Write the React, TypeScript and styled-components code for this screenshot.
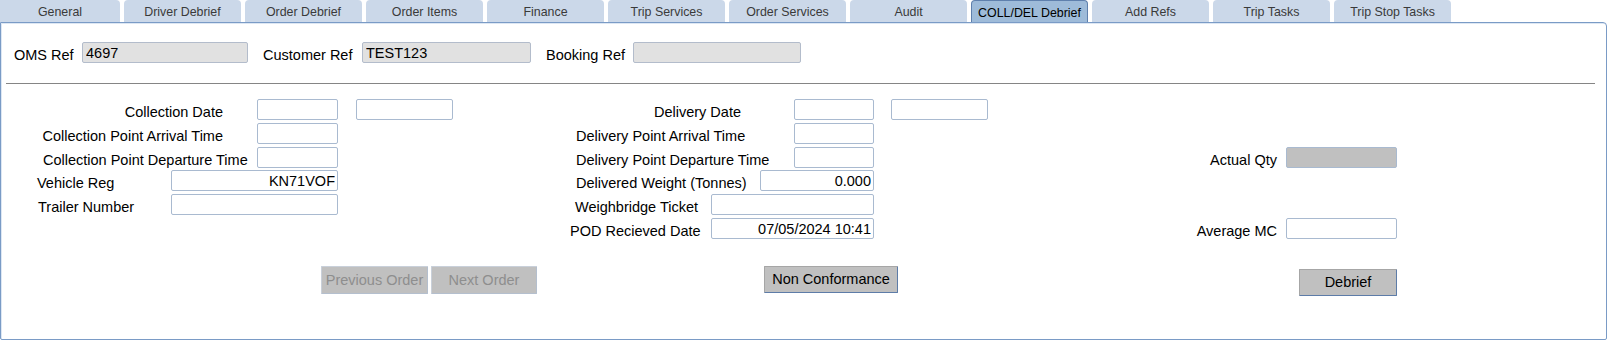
import React from "react";
import styled, { createGlobalStyle, css } from "styled-components";

const GlobalStyle = createGlobalStyle`
  html, body { margin: 0; padding: 0; background: #ffffff; }
  body {
    font-family: "Liberation Sans", Arial, sans-serif;
    width: 1609px;
    height: 342px;
    overflow: hidden;
  }
`;

const Screen = styled.div`
  width: 1609px;
  height: 342px;
  display: flex;
  flex-direction: column;
`;

const TabBar = styled.div`
  display: flex;
  gap: 4px;
  height: 22px;
`;

const Tab = styled.div<{ $active?: boolean }>`
  width: 117px;
  height: 22px;
  box-sizing: border-box;
  display: flex;
  align-items: center;
  justify-content: center;
  padding-top: 2px;
  font-size: 12.4px;
  color: #3a3a3a;
  background: #cbd8e9;
  border-radius: 4px 4px 0 0;
  &:first-child {
    width: 120px;
    border-top-left-radius: 0;
  }
  ${(p) =>
    p.$active &&
    css`
      background: #9ebbd9;
      color: #000000;
      border: 1px solid #5f80ad;
      border-bottom: none;
    `}
`;

const Panel = styled.div`
  width: 1607px;
  height: 318px;
  box-sizing: border-box;
  border: 1px solid #7a9bc6;
  border-radius: 0 4px 2px 2px;
  box-shadow: inset 1px 1px 0 #dde7f3;
  display: flex;
  flex-direction: column;
`;

const Header = styled.div`
  display: flex;
  align-items: center;
  gap: 15px;
  padding: 19px 0 0 13px;
  height: 21px;
`;

const HeaderField = styled.div`
  display: flex;
  align-items: center;
`;

const Label = styled.span<{ $w: number; $align?: "left" | "right"; $indent?: number }>`
  width: ${(p) => p.$w}px;
  flex: none;
  box-sizing: border-box;
  padding-left: ${(p) => p.$indent ?? 0}px;
  padding-top: 6px;
  text-align: ${(p) => p.$align ?? "left"};
  font-size: 14.5px;
  color: #000000;
  white-space: nowrap;
  line-height: 21px;
`;

const Input = styled.input<{
  $w: number;
  $ml?: number;
  $align?: "left" | "right";
  $tone?: "white" | "readonly" | "gray";
}>`
  width: ${(p) => p.$w}px;
  height: 21px;
  margin: 0 0 0 ${(p) => p.$ml ?? 0}px;
  flex: none;
  box-sizing: border-box;
  border: 1px solid #a9bad0;
  border-radius: 2px;
  padding: 1px 2px 0 3px;
  font-family: "Liberation Sans", Arial, sans-serif;
  font-size: 14.5px;
  color: #000000;
  text-align: ${(p) => p.$align ?? "left"};
  outline: none;
  background: ${(p) =>
    p.$tone === "readonly" ? "#e1e1e1" : p.$tone === "gray" ? "#c0c0c0" : "#ffffff"};
  ${(p) =>
    p.$tone === "readonly" &&
    css`
      border-color: #b3bccb;
    `}
`;

const Separator = styled.div`
  height: 1px;
  margin: 20px 11px 0 5px;
  background: #858585;
`;

const Body = styled.div`
  display: flex;
  margin-top: 15px;
`;

const Column = styled.div<{ $w?: number; $pad?: number }>`
  ${(p) => (p.$w ? `width: ${p.$w}px; flex: none;` : "flex: 1;")}
  box-sizing: border-box;
  padding-left: ${(p) => p.$pad ?? 0}px;
  display: flex;
  flex-direction: column;
`;

const FieldGrid = styled.div`
  display: grid;
  grid-template-rows: repeat(6, 21px);
  row-gap: 2.8px;
`;

const Row = styled.div<{ $line: number }>`
  grid-row: ${(p) => p.$line};
  display: flex;
  align-items: center;
`;

const Actions = styled.div<{ $indent: number; $top: number }>`
  display: flex;
  gap: 3px;
  margin: ${(p) => p.$top}px 0 0 ${(p) => p.$indent}px;
`;

const Button = styled.button<{ $w: number; $h?: number }>`
  width: ${(p) => p.$w}px;
  height: ${(p) => p.$h ?? 28}px;
  box-sizing: border-box;
  padding: 0;
  font-family: "Liberation Sans", Arial, sans-serif;
  font-size: 14.5px;
  color: #000000;
  background: #c0c0c0;
  border: 1px solid;
  border-color: #a6a6a6 #5d7ca8 #5d7ca8 #a6a6a6;
  border-radius: 1px;
  white-space: nowrap;
  &:disabled {
    color: #8e8e8e;
    border-color: #c9d0da #b4bfce #b4bfce #c9d0da;
  }
`;

const tabs = [
  "General",
  "Driver Debrief",
  "Order Debrief",
  "Order Items",
  "Finance",
  "Trip Services",
  "Order Services",
  "Audit",
  "COLL/DEL Debrief",
  "Add Refs",
  "Trip Tasks",
  "Trip Stop Tasks",
];

export default function App() {
  return (
    <Screen>
      <GlobalStyle />
      <TabBar>
        {tabs.map((t) => (
          <Tab key={t} $active={t === "COLL/DEL Debrief"}>
            {t}
          </Tab>
        ))}
      </TabBar>
      <Panel>
        <Header>
          <HeaderField>
            <Label $w={68}>OMS Ref</Label>
            <Input $w={166} $tone="readonly" readOnly value="4697" />
          </HeaderField>
          <HeaderField>
            <Label $w={99}>Customer Ref</Label>
            <Input $w={169} $tone="readonly" readOnly value="TEST123" />
          </HeaderField>
          <HeaderField>
            <Label $w={87}>Booking Ref</Label>
            <Input $w={168} $tone="readonly" readOnly value="" />
          </HeaderField>
        </Header>
        <Separator />
        <Body>
          <Column $w={569} $pad={36}>
            <FieldGrid>
              <Row $line={1}>
                <Label $w={186} $align="right">Collection Date</Label>
                <Input $w={81} $ml={34} readOnly value="" />
                <Input $w={97} $ml={18} readOnly value="" />
              </Row>
              <Row $line={2}>
                <Label $w={186} $align="right">Collection Point Arrival Time</Label>
                <Input $w={81} $ml={34} readOnly value="" />
              </Row>
              <Row $line={3}>
                <Label $w={220} $indent={6}>Collection Point Departure Time</Label>
                <Input $w={81} readOnly value="" />
              </Row>
              <Row $line={4}>
                <Label $w={134}>Vehicle Reg</Label>
                <Input $w={167} $align="right" readOnly value="KN71VOF" />
              </Row>
              <Row $line={5}>
                <Label $w={134} $indent={1}>Trailer Number</Label>
                <Input $w={167} readOnly value="" />
              </Row>
            </FieldGrid>
            <Actions $indent={284} $top={27}>
              <Button $w={107} disabled>Previous Order</Button>
              <Button $w={106} disabled>Next Order</Button>
            </Actions>
          </Column>
          <Column $w={620}>
            <FieldGrid>
              <Row $line={1}>
                <Label $w={171} $align="right">Delivery Date</Label>
                <Input $w={80} $ml={53} readOnly value="" />
                <Input $w={97} $ml={17} readOnly value="" />
              </Row>
              <Row $line={2}>
                <Label $w={224} $indent={6}>Delivery Point Arrival Time</Label>
                <Input $w={80} readOnly value="" />
              </Row>
              <Row $line={3}>
                <Label $w={224} $indent={6}>Delivery Point Departure Time</Label>
                <Input $w={80} readOnly value="" />
              </Row>
              <Row $line={4}>
                <Label $w={190} $indent={6}>Delivered Weight (Tonnes)</Label>
                <Input $w={114} $align="right" readOnly value="0.000" />
              </Row>
              <Row $line={5}>
                <Label $w={141} $indent={5}>Weighbridge Ticket</Label>
                <Input $w={163} readOnly value="" />
              </Row>
              <Row $line={6}>
                <Label $w={141}>POD Recieved Date</Label>
                <Input $w={163} $align="right" readOnly value="07/05/2024 10:41" />
              </Row>
            </FieldGrid>
            <Actions $indent={194} $top={27}>
              <Button $w={134} $h={27}>Non Conformance</Button>
            </Actions>
          </Column>
          <Column>
            <FieldGrid>
              <Row $line={3}>
                <Label $w={87} $align="right">Actual Qty</Label>
                <Input $w={111} $ml={9} $tone="gray" readOnly value="" />
              </Row>
              <Row $line={6}>
                <Label $w={87} $align="right">Average MC</Label>
                <Input $w={111} $ml={9} readOnly value="" />
              </Row>
            </FieldGrid>
            <Actions $indent={109} $top={30}>
              <Button $w={98} $h={27}>Debrief</Button>
            </Actions>
          </Column>
        </Body>
      </Panel>
    </Screen>
  );
}
